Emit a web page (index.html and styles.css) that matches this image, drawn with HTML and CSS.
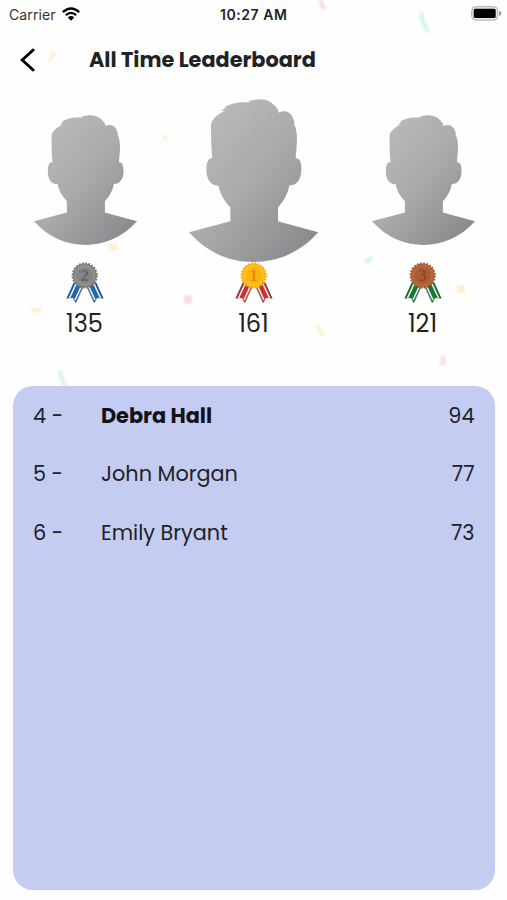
FILE: index.html
```html
<!DOCTYPE html>
<html lang="en">
<head>
  <meta charset="UTF-8">
  <title>All Time Leaderboard</title>
  <link rel="stylesheet" href="styles.css">
</head>
<body>
  <svg class="defs" width="0" height="0" aria-hidden="true">
    <defs>
      <linearGradient id="skin" x1="0" y1="0" x2="0.9" y2="1">
        <stop offset="0" stop-color="#bcbdbe"/>
        <stop offset="0.5" stop-color="#a9abac"/>
        <stop offset="1" stop-color="#85878a"/>
      </linearGradient>
      <symbol id="avatar" viewBox="28 27 388 489">
        <path fill="url(#skin)" d="M28 427L152 394V352C134 332 121 312 117 287C95 289 80 268 80 241C80 215 86 204 98 204C95 175 94 150 94 104C95 92 110 73 136 62L124 62C131 59 135 56 140 52L130 53C150 42 172 34 212 37L207 33C230 26 257 24 275 38C290 49 297 59 297 68C320 57 339 68 345 101L341 99C351 114 352 130 352 155L348 205C362 204 366 220 365 243C364 268 350 288 329 286C325 312 312 334 295 352V394L416 427C360 490 290 516 222 516C150 516 85 490 28 427Z"/>
      </symbol>
      <symbol id="ribbon" viewBox="0 0 38 41">
        <path fill="currentColor" d="M8 20L0.5 36.5L7 36L9.5 41L18 22ZM30 20L37.5 36.5L31 36L28.5 41L20 22Z"/>
        <path stroke="#f1f4f7" stroke-width="1.5" fill="none" d="M10 22L3.5 36M15.5 24L9 38M28 22L34.5 36M22.5 24L29 38"/>
        <path stroke="#333f4c" stroke-width="0.6" fill="none" d="M8 21L1 36.5M17.5 24L10 40.5M30 21L37 36.5M20.5 24L28 40.5"/>
      </symbol>
    </defs>
  </svg>

  <svg class="confetti" viewBox="0 0 507 400" fill="none" aria-hidden="true">
    <path class="mint" d="M421.5 12Q421.5 22 428 32"/>
    <path class="mint" d="M60 370Q61 379 66 388"/>
    <path class="pink" d="M321 0Q321 5 325 9"/>
    <path class="yellow" d="M55 52L49 62"/>
    <path class="yellow" d="M31 311L41 309"/>
    <path class="yellow" d="M317 325L323 336"/>
    <path class="yellow" d="M165 135V141"/>
    <path class="yellow square" d="M109 247H117"/>
    <path class="yellow square" d="M457 289H465"/>
    <path class="pink square" d="M184 299.5H192"/>
    <path class="mint" d="M370 256Q372 262 365 261"/>
    <path class="pink" d="M441 357Q448 361 440 364"/>
    <path class="mint" d="M159 52L162 56"/>
  </svg>

  <div class="screen">
    <div class="status-bar">
      <div class="carrier">
        <span>Carrier</span>
        <svg width="18" height="14" viewBox="0 0 18 14" fill="none" stroke="#000" stroke-width="2.3">
          <path d="M0.8 5.2Q9 -2.3 17.2 5.2"/>
          <path d="M3.8 8.2Q9 3.6 14.2 8.2"/>
          <path fill="#000" stroke="none" d="M5.8 10.4Q9 7.7 12.2 10.4L9 13.8Z"/>
        </svg>
      </div>
      <span class="time">10:27 AM</span>
      <svg class="battery" width="31" height="15" viewBox="0 0 31 15">
        <rect x="0.7" y="0.7" width="26" height="13.4" rx="4" fill="#e9e9e9" stroke="#aaa"/>
        <rect x="2.7" y="2.8" width="22" height="9.2" rx="1.6"/>
        <path fill="#999" d="M28 4.8Q30.5 5.5 30.5 7.4T28 10Z"/>
      </svg>
    </div>

    <div class="header">
      <svg class="back" width="16" height="24" viewBox="0 0 16 24" fill="none" stroke="#000" stroke-width="2.9">
        <path d="M14 1.2L2.2 12L14 22.8"/>
      </svg>
      <h1>All Time Leaderboard</h1>
    </div>

    <div class="podium">
      <div class="place">
        <div class="photo"><svg class="small"><use href="#avatar"/></svg></div>
        <svg class="medal blue" viewBox="0 0 38 41">
          <use href="#ribbon" width="38" height="41"/>
          <circle cx="18.7" cy="13.5" r="12" fill="#8a8a8a"/>
          <circle class="teeth" cx="18.7" cy="13.5" r="12.1" stroke="#777"/>
          <circle cx="18.7" cy="13.5" r="9" fill="#858585" stroke="#969696"/>
          <text class="num" x="18.7" y="19" fill="#626262">2</text>
        </svg>
        <span class="score">135</span>
      </div>
      <div class="place">
        <div class="photo"><svg class="large"><use href="#avatar"/></svg></div>
        <svg class="medal red" viewBox="0 0 38 41">
          <use href="#ribbon" width="38" height="41"/>
          <circle cx="18.7" cy="13.5" r="12" fill="#ffbd16"/>
          <circle class="teeth" cx="18.7" cy="13.5" r="12.1" stroke="#f9ab10"/>
          <circle cx="18.7" cy="13.5" r="9" fill="#fcb414" stroke="#ffca35"/>
          <text class="num" x="18.7" y="19" fill="#e58a00">1</text>
        </svg>
        <span class="score">161</span>
      </div>
      <div class="place">
        <div class="photo"><svg class="small"><use href="#avatar"/></svg></div>
        <svg class="medal green" viewBox="0 0 38 41">
          <use href="#ribbon" width="38" height="41"/>
          <circle cx="18.7" cy="13.5" r="12" fill="#b5673e"/>
          <circle class="teeth" cx="18.7" cy="13.5" r="12.1" stroke="#a4582f"/>
          <circle cx="18.7" cy="13.5" r="9" fill="#ad5b35" stroke="#b9683f"/>
          <text class="num" x="18.7" y="19" fill="#934525">3</text>
        </svg>
        <span class="score">121</span>
      </div>
    </div>

    <div class="board">
      <div class="row me">
        <span class="rank">4 -</span>
        <span class="name">Debra Hall</span>
        <span class="points">94</span>
      </div>
      <div class="row">
        <span class="rank">5 -</span>
        <span class="name">John Morgan</span>
        <span class="points">77</span>
      </div>
      <div class="row">
        <span class="rank">6 -</span>
        <span class="name">Emily Bryant</span>
        <span class="points">73</span>
      </div>
    </div>
  </div>
</body>
</html>
```
FILE: styles.css
```css
* {
  box-sizing: border-box;
}
body {
  margin: 0;
  background: #fefefe;
  color: #202226;
  font-family: Poppins, Inter, sans-serif;
}
.defs {
  position: absolute;
}
.screen {
  position: relative;
  display: flex;
  flex-direction: column;
  height: 900px;
  padding: 0 12.5px 10px 13px;
}
.confetti {
  position: absolute;
  top: 0;
  left: 0;
  width: 507px;
  height: 400px;
  stroke-width: 4;
  opacity: 0.8;
  filter: blur(1.1px);
}
.mint {
  stroke: #c9f1e5;
}
.pink {
  stroke: #fbd0df;
}
.yellow {
  stroke: #ffebc5;
}
.square {
  stroke-width: 8;
}
.status-bar {
  display: grid;
  grid-template-columns: 1fr auto 1fr;
  align-items: center;
  height: 28px;
  margin: 0 -7px 0 -4px;
  font-family: Inter, sans-serif;
  font-size: 14px;
}
.carrier {
  display: flex;
  align-items: center;
  gap: 6px;
  color: #333;
  letter-spacing: 0.1px;
}
.time {
  margin-right: 3px;
  font-weight: 600;
  letter-spacing: 0.55px;
}
.battery {
  justify-self: end;
  margin-top: -2px;
}
.header {
  display: flex;
  align-items: center;
  height: 64px;
  padding-left: 7px;
}
.header h1 {
  margin: -1px 0 0 53px;
  font-size: 20.8px;
  font-weight: 700;
}
.podium {
  display: grid;
  grid-template-columns: repeat(3, 1fr);
  margin: 7px -12.5px 0 -13px;
}
.place {
  display: flex;
  flex-direction: column;
  align-items: center;
}
.photo {
  display: flex;
  align-items: center;
  height: 163px;
}
.small {
  width: 103px;
  height: 130px;
  margin: -2px 0 0 1px;
}
.large {
  width: 129.3px;
  height: 163px;
  margin-left: 1px;
}
.medal {
  width: 38px;
  height: 41px;
  margin-left: 1px;
}
.blue {
  color: #2466a8;
}
.red {
  color: #cc302b;
}
.green {
  color: #167a2d;
}
.teeth {
  fill: none;
  stroke-width: 2;
  stroke-dasharray: 1.9 1.27;
}
.num {
  font: bold 16px "Liberation Serif", serif;
  text-anchor: middle;
}
.score {
  height: 42px;
  font-size: 24px;
  line-height: 42px;
}
.board {
  flex: 1;
  margin-top: 41px;
  background: #c5ccf1;
  border-radius: 20px;
}
.row {
  display: flex;
  align-items: center;
  height: 58.6px;
  padding: 0 20px;
  font-size: 20.8px;
}
.rank {
  width: 68px;
}
.name {
  flex: 1;
}
.me .name {
  color: #101218;
  font-weight: 700;
}
```
